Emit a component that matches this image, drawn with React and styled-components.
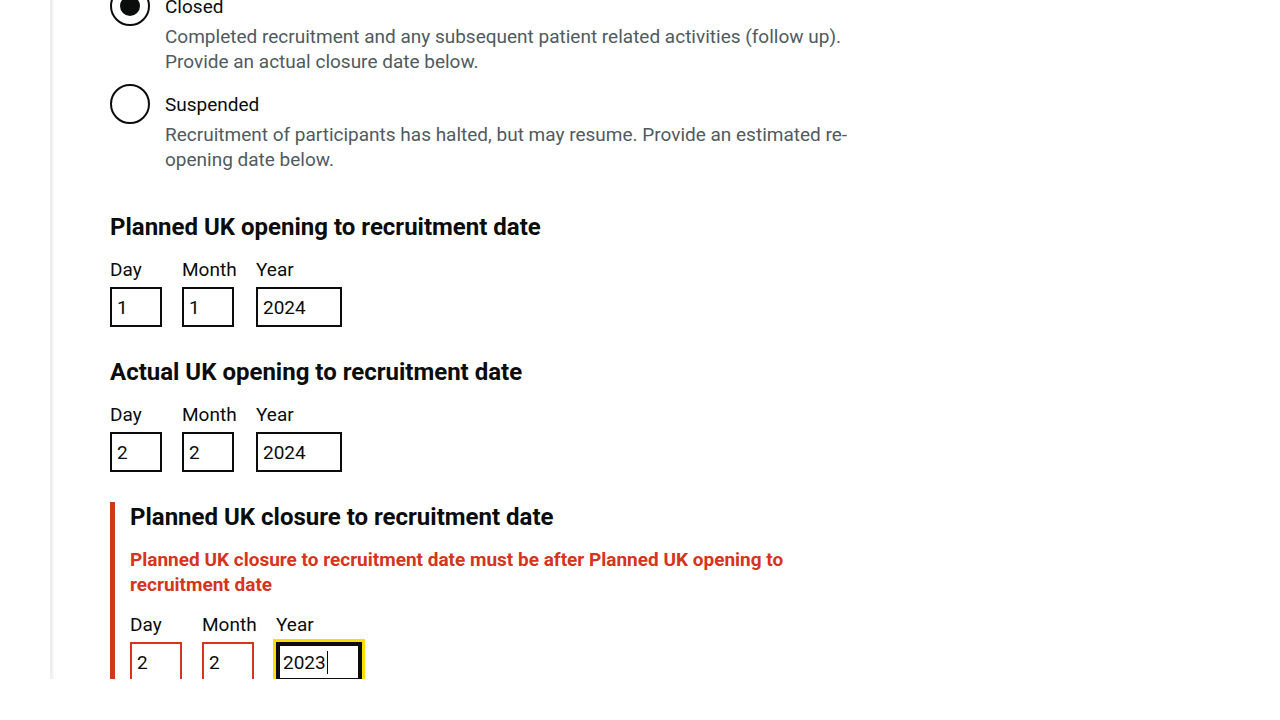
import React from 'react';
import styled, { createGlobalStyle, css } from 'styled-components';

const ink = '#0b0c0c';
const muted = '#505a5f';
const danger = '#d4351c';

const GlobalStyle = createGlobalStyle`
  *, *::before, *::after {
    box-sizing: border-box;
  }
  body {
    margin: 0;
    background: #fff;
    color: ${ink};
    font-family: Roboto, Arial, sans-serif;
    font-size: 19px;
    line-height: 25px;
  }
`;

const Page = styled.div`
  height: 100vh;
  padding: 0 0 41px 50px;
`;

const Pane = styled.main`
  height: 100%;
  overflow: hidden;
  border-left: 2px solid #eee;
  box-shadow: inset 2px 0 2px -1px #eee;
  padding: 0 58px;
`;

const Form = styled.form`
  max-width: 760px;
  margin-top: -14px;
`;

const RadioGroup = styled.div`
  display: flex;
  flex-direction: column;
  gap: 10px;
  margin-bottom: 40px;
`;

const RadioItem = styled.div`
  display: grid;
  grid-template-columns: 40px 1fr;
`;

const Radio = styled.input.attrs({ type: 'radio' })`
  appearance: none;
  display: grid;
  place-items: center;
  width: 40px;
  height: 40px;
  margin: 0;
  border: 2px solid ${ink};
  border-radius: 50%;
  background: #fff;

  &:checked::before {
    content: '';
    width: 20px;
    height: 20px;
    border-radius: 50%;
    background: ${ink};
  }
`;

const RadioText = styled.div`
  padding: 8px 15px 0;
`;

const RadioLabel = styled.label`
  display: block;
  margin-bottom: 5px;
`;

const Hint = styled.div`
  color: ${muted};
`;

const Question = styled.div`
  margin-bottom: 30px;

  ${({ $invalid }) =>
    $invalid &&
    css`
      padding-left: 15px;
      border-left: 5px solid ${danger};
    `}
`;

const DateGroup = styled.fieldset`
  min-width: 0;
  margin: 0;
  padding: 0;
  border: 0;
`;

const Legend = styled.legend`
  display: block;
  width: 100%;
  margin-bottom: 15px;
  padding: 0;
  font-size: 24px;
  line-height: 30px;
  font-weight: 700;
`;

const ErrorText = styled.p`
  margin: 0 0 15px;
  color: ${danger};
  font-weight: 700;
`;

const DateRow = styled.div`
  display: grid;
  grid-template-columns: 52px 54px 86px;
  column-gap: 20px;
`;

const Field = styled.div`
  position: relative;
`;

const FieldLabel = styled.label`
  display: block;
  margin-bottom: 5px;
`;

const DateInput = styled.input.attrs({ type: 'text', inputMode: 'numeric' })`
  display: block;
  width: ${({ $wide }) => ($wide ? 86 : 52)}px;
  height: 40px;
  margin: 0;
  padding: 5px;
  border: 2px solid ${({ $invalid }) => ($invalid ? danger : ink)};
  border-radius: 0;
  background: #fff;
  color: ${ink};
  font: inherit;

  ${({ $active }) =>
    $active &&
    css`
      border-color: ${ink};
      outline: 3px solid #fd0;
      box-shadow: inset 0 0 0 2px ${ink};
      caret-color: transparent;
    `}
`;

const Caret = styled.span`
  position: absolute;
  left: 51px;
  bottom: 8px;
  width: 1px;
  height: 23px;
  background: ${ink};
`;

function RadioOption({ id, label, hint, defaultChecked }) {
  return (
    <RadioItem>
      <Radio id={id} name="status" value={id} defaultChecked={defaultChecked} aria-describedby={`${id}-hint`} />
      <RadioText>
        <RadioLabel htmlFor={id}>{label}</RadioLabel>
        <Hint id={`${id}-hint`}>{hint}</Hint>
      </RadioText>
    </RadioItem>
  );
}

function DateQuestion({ id, title, values, error, activePart }) {
  const parts = ['Day', 'Month', 'Year'];
  return (
    <Question $invalid={Boolean(error)}>
      <DateGroup>
        <Legend>{title}</Legend>
        {error && <ErrorText>{error}</ErrorText>}
        <DateRow>
          {parts.map((part, i) => (
            <Field key={part}>
              <FieldLabel htmlFor={`${id}-${part}`}>{part}</FieldLabel>
              <DateInput
                id={`${id}-${part}`}
                defaultValue={values[i]}
                $wide={part === 'Year'}
                $invalid={Boolean(error)}
                $active={part === activePart}
              />
              {part === activePart && <Caret />}
            </Field>
          ))}
        </DateRow>
      </DateGroup>
    </Question>
  );
}

export default function App() {
  return (
    <>
      <GlobalStyle />
      <Page>
        <Pane>
          <Form>
            <RadioGroup>
              <RadioOption
                id="closed"
                label="Closed"
                hint="Completed recruitment and any subsequent patient related activities (follow up). Provide an actual closure date below."
                defaultChecked
              />
              <RadioOption
                id="suspended"
                label="Suspended"
                hint="Recruitment of participants has halted, but may resume. Provide an estimated re-opening date below."
              />
            </RadioGroup>
            <DateQuestion id="planned-opening" title="Planned UK opening to recruitment date" values={['1', '1', '2024']} />
            <DateQuestion id="actual-opening" title="Actual UK opening to recruitment date" values={['2', '2', '2024']} />
            <DateQuestion
              id="planned-closure"
              title="Planned UK closure to recruitment date"
              values={['2', '2', '2023']}
              error="Planned UK closure to recruitment date must be after Planned UK opening to recruitment date"
              activePart="Year"
            />
          </Form>
        </Pane>
      </Page>
    </>
  );
}
